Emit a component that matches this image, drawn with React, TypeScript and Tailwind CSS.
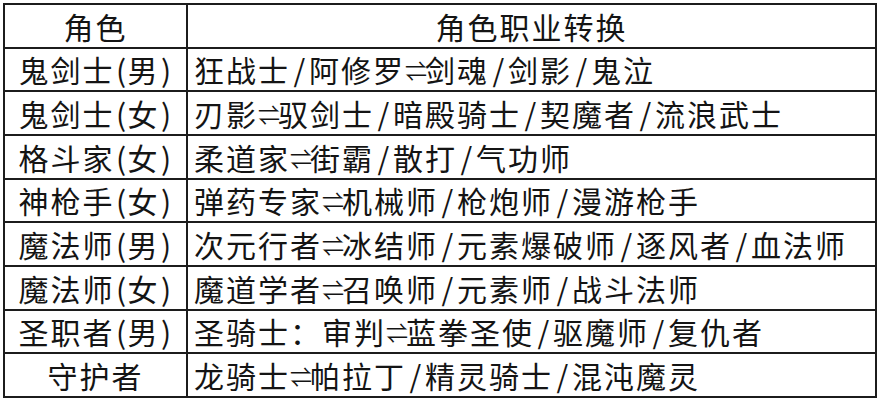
const rows: [string, string][] = [
  ["鬼剑士(男)", "狂战士/阿修罗⇌剑魂/剑影/鬼泣"],
  ["鬼剑士(女)", "刃影⇌驭剑士/暗殿骑士/契魔者/流浪武士"],
  ["格斗家(女)", "柔道家⇌街霸/散打/气功师"],
  ["神枪手(女)", "弹药专家⇌机械师/枪炮师/漫游枪手"],
  ["魔法师(男)", "次元行者⇌冰结师/元素爆破师/逐风者/血法师"],
  ["魔法师(女)", "魔道学者⇌召唤师/元素师/战斗法师"],
  ["圣职者(男)", "圣骑士：审判⇌蓝拳圣使/驱魔师/复仇者"],
  ["守护者", "龙骑士⇌帕拉丁/精灵骑士/混沌魔灵"],
];

// slashes, parens and the swap arrow get their own fixed slots, the source spaces them wider
function Spaced({ text }: { text: string }) {
  return (
    <>
      {text.split(/([/⇌()])/).map((p, i) =>
        p === "/" ? (
          <span key={i} className="inline-block w-[19px] text-center tracking-normal">/</span>
        ) : p === "⇌" ? (
          <span key={i} className="inline-block w-[20px] text-center align-[3px] text-[22px] tracking-normal">⇌</span>
        ) : p === "(" || p === ")" ? (
          <span key={i} className="inline-block w-[13px] text-center tracking-normal">{p}</span>
        ) : (
          <span key={i}>{p}</span>
        ),
      )}
    </>
  );
}

export default function App() {
  return (
    <div className="h-[400px] w-[880px] bg-white pl-[3px] pt-[3px] font-['Noto_Sans_CJK_SC','Noto_Sans',sans-serif] text-[#141414]">
      <table className="h-[395px] w-[874px] table-fixed border-collapse text-[30px] font-normal leading-none tracking-[2px]">
        <colgroup>
          <col className="w-[183px]" />
          <col />
        </colgroup>
        <tbody>
          <tr>
            <th className="border-2 border-[#1c1c1c] text-center font-normal">角色</th>
            <th className="border-2 border-[#1c1c1c] text-center font-normal">角色职业转换</th>
          </tr>
          {rows.map(([role, jobs]) => (
            <tr key={role}>
              <td className="border-2 border-[#1c1c1c] text-center whitespace-nowrap">
                <Spaced text={role} />
              </td>
              <td className="border-2 border-[#1c1c1c] pl-[6px] whitespace-nowrap">
                <Spaced text={jobs} />
              </td>
            </tr>
          ))}
        </tbody>
      </table>
    </div>
  );
}
